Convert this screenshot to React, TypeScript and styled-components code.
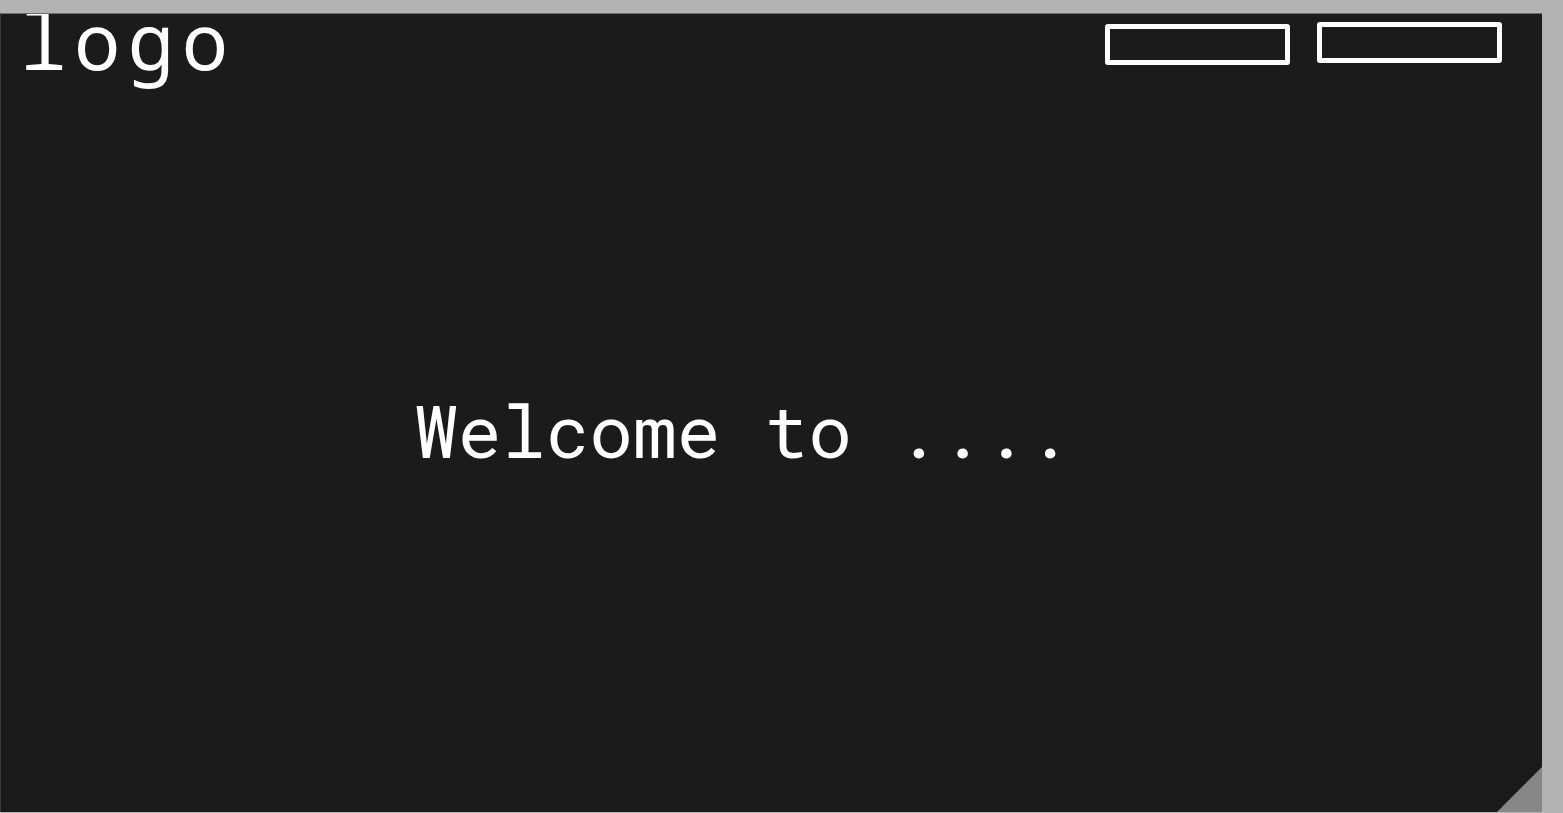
import React from "react";
import styled, { createGlobalStyle } from "styled-components";

const Global = createGlobalStyle`
  html, body { margin: 0; padding: 0; background: #b3b3b3; overflow: hidden; }
  #root { width: 1563px; height: 813px; }
`;

const Page = styled.div`
  box-sizing: border-box;
  width: 1563px;
  height: 813px;
  padding-top: 13px;
`;

const Panel = styled.div`
  position: relative;
  box-sizing: border-box;
  width: 1542px;
  height: 799px;
  background: #1b1b1b;
  border-top: 1px solid #6f6f6f;
  border-left: 1px solid #3a3a3a;
  display: flex;
  flex-direction: column;
  overflow: hidden;
`;

const Header = styled.header`
  display: flex;
  justify-content: space-between;
  align-items: flex-start;
  height: 90px;
`;

const Logo = styled.div`
  font-family: "Noto Sans Mono", "Liberation Mono", monospace;
  font-size: 78px;
  letter-spacing: 7px;
  line-height: 1;
  color: #ffffff;
  margin-top: -13px;
  margin-left: 19px;
`;

const Nav = styled.nav`
  display: flex;
  align-items: flex-start;
  gap: 27px;
  margin-right: 40px;
`;

const NavButton = styled.button<{ $top: number }>`
  box-sizing: border-box;
  width: 185px;
  height: 41px;
  margin-top: ${(p) => p.$top}px;
  background: transparent;
  border: 5px solid #ffffff;
  border-radius: 3px;
  padding: 0;
`;

const Hero = styled.main`
  flex: 1;
  display: flex;
  align-items: center;
  padding-left: 413px;
  padding-bottom: 56px;
`;

const Title = styled.h1`
  margin: 0;
  font-family: "Roboto Mono", "DejaVu Sans Mono", monospace;
  font-weight: 400;
  font-size: 73px;
  line-height: 1;
  color: #ffffff;
  white-space: pre;
`;

const Corner = styled.div`
  position: absolute;
  right: 0;
  bottom: 0;
  width: 45px;
  height: 45px;
  background: #878787;
  clip-path: polygon(100% 0, 100% 100%, 0 100%);
`;

export default function App() {
  return (
    <>
      <Global />
      <Page>
        <Panel>
          <Header>
            <Logo>logo</Logo>
            <Nav>
              <NavButton $top={10} aria-label="button one" />
              <NavButton $top={8} aria-label="button two" />
            </Nav>
          </Header>
          <Hero>
            <Title>Welcome to ....</Title>
          </Hero>
          <Corner />
        </Panel>
      </Page>
    </>
  );
}
